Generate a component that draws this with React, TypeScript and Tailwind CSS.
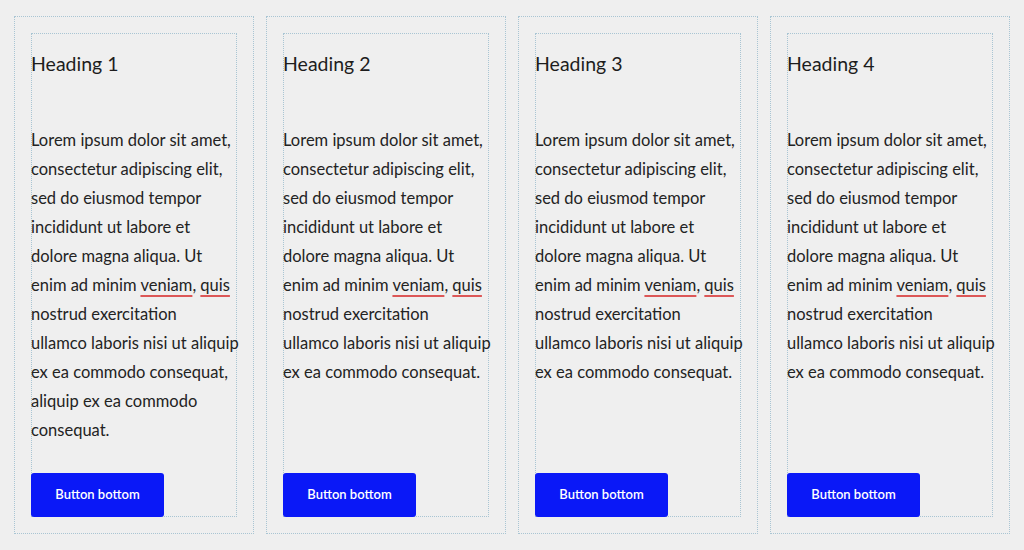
import React from "react";

const lines1 = [
  "Lorem ipsum dolor sit amet,",
  "consectetur adipiscing elit,",
  "sed do eiusmod tempor",
  "incididunt ut labore et",
  "dolore magna aliqua. Ut",
  "SPELL",
  "nostrud exercitation",
  "ullamco laboris nisi ut aliquip",
  "ex ea commodo consequat,",
  "aliquip ex ea commodo",
  "consequat.",
];

const linesRest = lines1.slice(0, 8).concat(["ex ea commodo consequat."]);

function Flagged({ children }: { children: React.ReactNode }) {
  return (
    <span className="underline decoration-[#dc5757] decoration-2 underline-offset-[4px]">
      {children}
    </span>
  );
}

function Line({ text }: { text: string }) {
  if (text === "SPELL") {
    return (
      <span className="block whitespace-nowrap">
        enim ad minim <Flagged>veniam</Flagged>, <Flagged>quis</Flagged>
      </span>
    );
  }
  return <span className="block whitespace-nowrap">{text}</span>;
}

function Card({ n, lines }: { n: number; lines: string[] }) {
  return (
    <div className="flex min-w-0 border border-dotted border-[#a9c5d3] p-4">
      <div className="flex min-w-0 flex-1 flex-col border border-dotted border-[#a9c5d3] pt-4">
        <h2 className="-ml-px text-[19.5px] leading-[28px] text-[#1d1d1d]">Heading {n}</h2>
        <p className="-ml-px mt-[48px] mb-[28px] text-[16.5px] leading-[29px] text-[#232323]">
          {lines.map((t, i) => (
            <Line key={i} text={t} />
          ))}
        </p>
        <div className="mt-auto -ml-px -mb-px">
          <button className="h-[44px] w-[133px] rounded-[3px] bg-[#0a18f7] text-[13px] font-semibold text-white">
            Button bottom
          </button>
        </div>
      </div>
    </div>
  );
}

export default function App() {
  return (
    <div
      className="h-[550px] w-[1024px] bg-[#efefef] px-[14px] pt-4"
      style={{ fontFamily: "Lato, 'Noto Sans', sans-serif" }}
    >
      <div className="grid grid-cols-4 gap-3">
        <Card n={1} lines={lines1} />
        <Card n={2} lines={linesRest} />
        <Card n={3} lines={linesRest} />
        <Card n={4} lines={linesRest} />
      </div>
    </div>
  );
}
